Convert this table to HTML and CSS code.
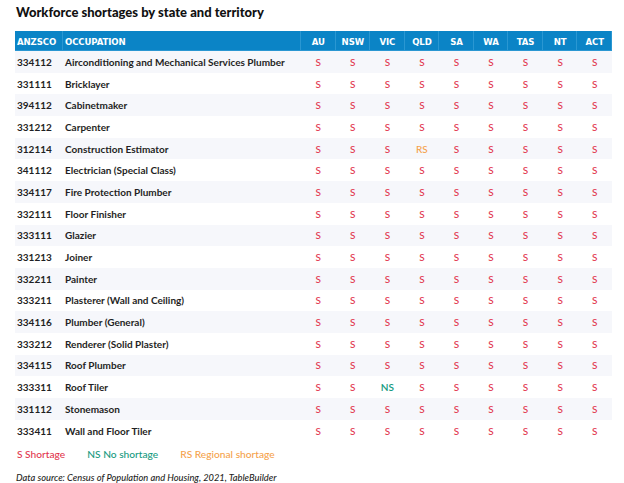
FILE: index.html
```html
<!DOCTYPE html>
<html>
<head>
<meta charset="utf-8">
<link rel="stylesheet" href="styles.css">
</head>
<body>
<div class="page">
  <h1 class="title">Workforce shortages by state and territory</h1>
  <table class="grid">
    <colgroup>
      <col class="c-code"><col class="c-occ">
      <col class="c-st"><col class="c-st"><col class="c-st"><col class="c-st"><col class="c-st"><col class="c-st"><col class="c-st"><col class="c-st"><col class="c-st">
    </colgroup>
    <thead>
      <tr>
        <th class="l">ANZSCO</th><th class="l">OCCUPATION</th>
        <th>AU</th><th>NSW</th><th>VIC</th><th>QLD</th><th>SA</th><th>WA</th><th>TAS</th><th>NT</th><th>ACT</th>
      </tr>
    </thead>
    <tbody>
      <tr><td>334112</td><td>Airconditioning and Mechanical Services Plumber</td><td class="s">S</td><td class="s">S</td><td class="s">S</td><td class="s">S</td><td class="s">S</td><td class="s">S</td><td class="s">S</td><td class="s">S</td><td class="s">S</td></tr>
      <tr><td>331111</td><td>Bricklayer</td><td class="s">S</td><td class="s">S</td><td class="s">S</td><td class="s">S</td><td class="s">S</td><td class="s">S</td><td class="s">S</td><td class="s">S</td><td class="s">S</td></tr>
      <tr><td>394112</td><td>Cabinetmaker</td><td class="s">S</td><td class="s">S</td><td class="s">S</td><td class="s">S</td><td class="s">S</td><td class="s">S</td><td class="s">S</td><td class="s">S</td><td class="s">S</td></tr>
      <tr><td>331212</td><td>Carpenter</td><td class="s">S</td><td class="s">S</td><td class="s">S</td><td class="s">S</td><td class="s">S</td><td class="s">S</td><td class="s">S</td><td class="s">S</td><td class="s">S</td></tr>
      <tr><td>312114</td><td>Construction Estimator</td><td class="s">S</td><td class="s">S</td><td class="s">S</td><td class="rs">RS</td><td class="s">S</td><td class="s">S</td><td class="s">S</td><td class="s">S</td><td class="s">S</td></tr>
      <tr><td>341112</td><td>Electrician (Special Class)</td><td class="s">S</td><td class="s">S</td><td class="s">S</td><td class="s">S</td><td class="s">S</td><td class="s">S</td><td class="s">S</td><td class="s">S</td><td class="s">S</td></tr>
      <tr><td>334117</td><td>Fire Protection Plumber</td><td class="s">S</td><td class="s">S</td><td class="s">S</td><td class="s">S</td><td class="s">S</td><td class="s">S</td><td class="s">S</td><td class="s">S</td><td class="s">S</td></tr>
      <tr><td>332111</td><td>Floor Finisher</td><td class="s">S</td><td class="s">S</td><td class="s">S</td><td class="s">S</td><td class="s">S</td><td class="s">S</td><td class="s">S</td><td class="s">S</td><td class="s">S</td></tr>
      <tr><td>333111</td><td>Glazier</td><td class="s">S</td><td class="s">S</td><td class="s">S</td><td class="s">S</td><td class="s">S</td><td class="s">S</td><td class="s">S</td><td class="s">S</td><td class="s">S</td></tr>
      <tr><td>331213</td><td>Joiner</td><td class="s">S</td><td class="s">S</td><td class="s">S</td><td class="s">S</td><td class="s">S</td><td class="s">S</td><td class="s">S</td><td class="s">S</td><td class="s">S</td></tr>
      <tr><td>332211</td><td>Painter</td><td class="s">S</td><td class="s">S</td><td class="s">S</td><td class="s">S</td><td class="s">S</td><td class="s">S</td><td class="s">S</td><td class="s">S</td><td class="s">S</td></tr>
      <tr><td>333211</td><td>Plasterer (Wall and Ceiling)</td><td class="s">S</td><td class="s">S</td><td class="s">S</td><td class="s">S</td><td class="s">S</td><td class="s">S</td><td class="s">S</td><td class="s">S</td><td class="s">S</td></tr>
      <tr><td>334116</td><td>Plumber (General)</td><td class="s">S</td><td class="s">S</td><td class="s">S</td><td class="s">S</td><td class="s">S</td><td class="s">S</td><td class="s">S</td><td class="s">S</td><td class="s">S</td></tr>
      <tr><td>333212</td><td>Renderer (Solid Plaster)</td><td class="s">S</td><td class="s">S</td><td class="s">S</td><td class="s">S</td><td class="s">S</td><td class="s">S</td><td class="s">S</td><td class="s">S</td><td class="s">S</td></tr>
      <tr><td>334115</td><td>Roof Plumber</td><td class="s">S</td><td class="s">S</td><td class="s">S</td><td class="s">S</td><td class="s">S</td><td class="s">S</td><td class="s">S</td><td class="s">S</td><td class="s">S</td></tr>
      <tr><td>333311</td><td>Roof Tiler</td><td class="s">S</td><td class="s">S</td><td class="ns">NS</td><td class="s">S</td><td class="s">S</td><td class="s">S</td><td class="s">S</td><td class="s">S</td><td class="s">S</td></tr>
      <tr><td>331112</td><td>Stonemason</td><td class="s">S</td><td class="s">S</td><td class="s">S</td><td class="s">S</td><td class="s">S</td><td class="s">S</td><td class="s">S</td><td class="s">S</td><td class="s">S</td></tr>
      <tr><td>333411</td><td>Wall and Floor Tiler</td><td class="s">S</td><td class="s">S</td><td class="s">S</td><td class="s">S</td><td class="s">S</td><td class="s">S</td><td class="s">S</td><td class="s">S</td><td class="s">S</td></tr>
    </tbody>
  </table>
  <div class="legend">
    <span class="s">S Shortage</span>
    <span class="ns">NS No shortage</span>
    <span class="rs">RS Regional shortage</span>
  </div>
  <p class="source">Data source: Census of Population and Housing, 2021, TableBuilder</p>
</div>
</body>
</html>
```
FILE: styles.css
```css
html, body {
  margin: 0;
  padding: 0;
  background: #ffffff;
}
.page {
  padding: 4px 0 0 15px;
  width: 597px;
  font-family: Lato, "Open Sans", sans-serif;
  color: #1f1f24;
}
.title {
  margin: 0 0 10px 1px;
  font-family: Lato, sans-serif;
  font-weight: 900;
  font-size: 13px;
  line-height: 17px;
  color: #111;
}
.grid {
  width: 597px;
  border-collapse: collapse;
  table-layout: fixed;
}
.c-code { width: 48px; }
.c-occ { width: 238px; }
.c-st { width: 34.55px; }
.grid thead tr {
  background: #0b84c6;
}
.grid th {
  height: 20px;
  padding: 0;
  color: #ffffff;
  font-family: "DejaVu Sans Condensed", "Liberation Sans Narrow", sans-serif;
  font-stretch: condensed;
  font-weight: bold;
  font-size: 9.5px;
  text-align: center;
  letter-spacing: -0.1px;
  box-shadow: inset -1px -1px 0 #2a97d2;
}
.grid th.l {
  text-align: left;
  padding-left: 2px;
}
.grid td {
  height: 21.7px;
  padding: 0;
  font-size: 10px;
  font-weight: 700;
  text-align: center;
  color: #1f1f24;
}
.grid td:nth-child(1) { text-align: left; padding-left: 2px; }
.grid td:nth-child(2) { text-align: left; padding-left: 2px; }
.grid tbody tr:nth-child(odd) { background: #f6f7fb; }
.grid td.s { color: #e2374f; font-weight: 500; }
.grid td.ns { color: #169a80; font-weight: 600; }
.grid td.rs { color: #f5a24c; font-weight: 500; }
.legend {
  display: flex;
  gap: 22px;
  margin: 6px 0 0 2px;
  font-size: 10.2px;
  line-height: 14px;
  font-weight: 500;
}
.legend .s { color: #e2374f; }
.legend .ns { color: #169a80; }
.legend .rs { color: #f5a24c; }
.source {
  margin: 11px 0 0 1px;
  font-size: 9.3px;
  font-style: italic;
  font-weight: 500;
  color: #1f1f24;
}
```
